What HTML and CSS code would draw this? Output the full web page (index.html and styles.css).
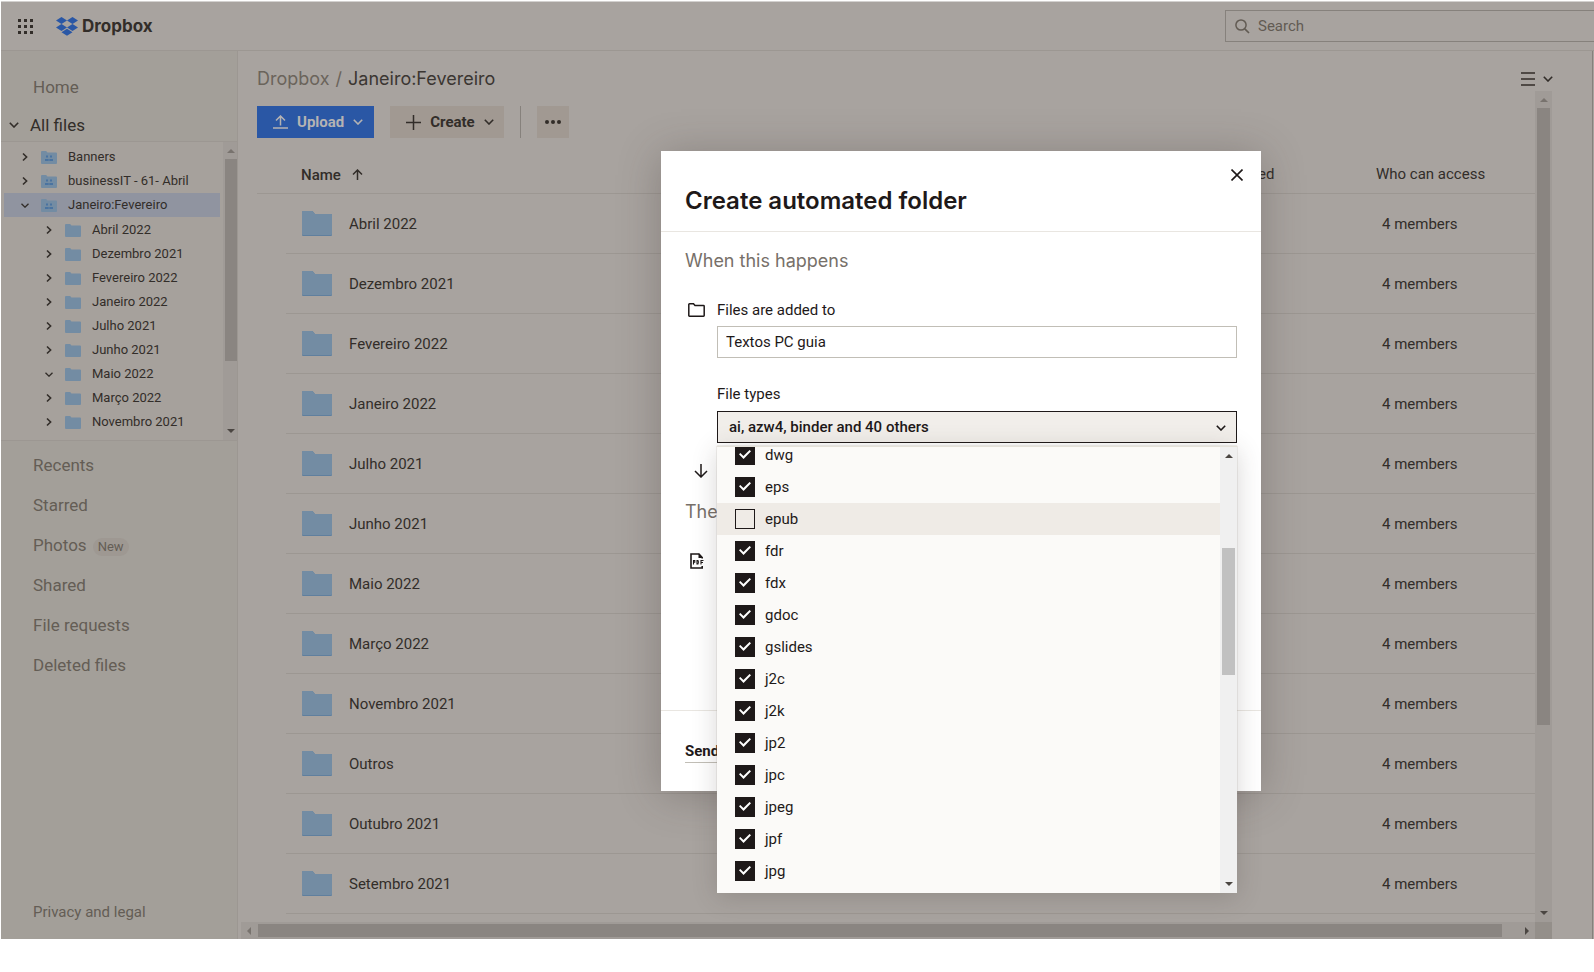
FILE: index.html
```
<!DOCTYPE html>
<html lang="en">
<head>
<meta charset="utf-8">
<title>Janeiro:Fevereiro - Dropbox</title>
<link rel="stylesheet" href="styles.css">
</head>
<body>
<svg class="defs" aria-hidden="true">
  <symbol id="chev-down" viewBox="0 0 10 6"><path d="M.8.8 5 5 9.2.8" fill="none" stroke="currentColor" stroke-width="1.6"/></symbol>
  <symbol id="chev-right" viewBox="0 0 6 10"><path d="M1 1.5 4.6 5 1 8.5" fill="none" stroke="currentColor" stroke-width="1.6"/></symbol>
  <symbol id="folder" viewBox="0 0 30 25"><path d="M0 1.2Q0 0 1.2 0H10.5L13 3H29Q30 3 30 4V24Q30 25 29 25H1Q0 25 0 24Z" fill="#5f7f9e"/><path d="M0 1.2Q0 0 1.2 0H10.5L13 3H29Q30 3 30 4V23.2Q30 24 29 24H1Q0 24 0 23.2Z" fill="#738ca3"/></symbol>
  <symbol id="folder-sm" viewBox="0 0 16 13"><path d="M0 1Q0 0 1 0H5.2L6.4 1.6H15Q16 1.6 16 2.6V12Q16 13 15 13H1Q0 13 0 12Z" fill="#738ca3"/></symbol>
  <symbol id="folder-team" viewBox="0 0 16 13"><path d="M0 1Q0 0 1 0H5.2L6.4 1.6H15Q16 1.6 16 2.6V12Q16 13 15 13H1Q0 13 0 12Z" fill="#738ca3"/><path d="M5 4.500h2v2H5zM9 4.500h2v2H9zM4 8h3.700v2H4zM8.300 8H12v2H8.300z" fill="#4a73a0"/></symbol>
</svg>

<div class="app">
  <header class="topbar">
    <button class="apps" aria-label="Apps"><svg width="15" height="15" viewBox="0 0 15 15"><path d="M0 0h3v3H0zM6 0h3v3H6zM12 0h3v3h-3zM0 6h3v3H0zM6 6h3v3H6zM12 6h3v3h-3zM0 12h3v3H0zM6 12h3v3H6zM12 12h3v3h-3z" fill="currentColor"/></svg></button>
    <a class="logo" href="#"><svg width="22" height="19" viewBox="0 0 22 19"><path d="M5.500 0 11 3.500 5.500 7 0 3.500zM16.500 0 22 3.500 16.500 7 11 3.500zM0 10.500 5.500 7 11 10.500 5.500 14zM16.500 7 22 10.500 16.500 14 11 10.500zM5.500 15.300 11 11.800 16.500 15.300 11 18.800z" fill="#2a57a5"/></svg><span>Dropbox</span></a>
    <label class="search"><svg width="15" height="15" viewBox="0 0 15 15"><circle cx="6" cy="6" r="5.100" fill="none" stroke="currentColor" stroke-width="1.500"/><path d="m9.800 9.800 4.200 4.200" stroke="currentColor" stroke-width="1.700"/></svg><input type="search" placeholder="Search" aria-label="Search"></label>
  </header>

  <div class="columns">
    <nav class="sidebar">
      <a class="nav-item home" href="#">Home</a>
      <a class="all-files" href="#"><svg width="10" height="6"><use href="#chev-down"/></svg>All files</a>
      <div class="tree">
        <ul class="tree-list">
          <li class="node"><svg class="chev" width="6" height="10"><use href="#chev-right"/></svg><svg width="16" height="13"><use href="#folder-team"/></svg><span>Banners</span></li>
          <li class="node"><svg class="chev" width="6" height="10"><use href="#chev-right"/></svg><svg width="16" height="13"><use href="#folder-team"/></svg><span>businessIT - 61- Abril</span></li>
          <li class="node selected"><svg class="chev" width="8" height="5"><use href="#chev-down"/></svg><svg width="16" height="13"><use href="#folder-team"/></svg><span>Janeiro:Fevereiro</span></li>
          <li class="node child"><svg class="chev" width="6" height="10"><use href="#chev-right"/></svg><svg width="16" height="13"><use href="#folder-sm"/></svg><span>Abril 2022</span></li>
          <li class="node child"><svg class="chev" width="6" height="10"><use href="#chev-right"/></svg><svg width="16" height="13"><use href="#folder-sm"/></svg><span>Dezembro 2021</span></li>
          <li class="node child"><svg class="chev" width="6" height="10"><use href="#chev-right"/></svg><svg width="16" height="13"><use href="#folder-sm"/></svg><span>Fevereiro 2022</span></li>
          <li class="node child"><svg class="chev" width="6" height="10"><use href="#chev-right"/></svg><svg width="16" height="13"><use href="#folder-sm"/></svg><span>Janeiro 2022</span></li>
          <li class="node child"><svg class="chev" width="6" height="10"><use href="#chev-right"/></svg><svg width="16" height="13"><use href="#folder-sm"/></svg><span>Julho 2021</span></li>
          <li class="node child"><svg class="chev" width="6" height="10"><use href="#chev-right"/></svg><svg width="16" height="13"><use href="#folder-sm"/></svg><span>Junho 2021</span></li>
          <li class="node child"><svg class="chev" width="8" height="5"><use href="#chev-down"/></svg><svg width="16" height="13"><use href="#folder-sm"/></svg><span>Maio 2022</span></li>
          <li class="node child"><svg class="chev" width="6" height="10"><use href="#chev-right"/></svg><svg width="16" height="13"><use href="#folder-sm"/></svg><span>Março 2022</span></li>
          <li class="node child"><svg class="chev" width="6" height="10"><use href="#chev-right"/></svg><svg width="16" height="13"><use href="#folder-sm"/></svg><span>Novembro 2021</span></li>
          <li class="node child"><svg class="chev" width="6" height="10"><use href="#chev-right"/></svg><svg width="16" height="13"><use href="#folder-sm"/></svg></li>
        </ul>
        <div class="vbar tree-bar"><i class="up dim"></i><b></b><i class="down"></i></div>
      </div>
      <div class="nav-list">
        <a class="nav-item" href="#">Recents</a>
        <a class="nav-item" href="#">Starred</a>
        <a class="nav-item" href="#">Photos <span class="badge">New</span></a>
        <a class="nav-item" href="#">Shared</a>
        <a class="nav-item" href="#">File requests</a>
        <a class="nav-item" href="#">Deleted files</a>
      </div>
      <a class="legal" href="#">Privacy and legal</a>
    </nav>

    <main class="main">
      <div class="crumbs">
        <a href="#">Dropbox</a><span class="slash">/</span><span class="here">Janeiro:Fevereiro</span>
        <button class="view" aria-label="View options"><svg width="14" height="14" viewBox="0 0 14 14"><path d="M0 1h14M0 7h14M0 13h14" stroke="currentColor" stroke-width="1.500"/></svg><svg width="10" height="6"><use href="#chev-down"/></svg></button>
      </div>
      <div class="scroller">
        <div class="content">
          <div class="toolbar">
            <button class="btn primary"><svg width="15" height="14" viewBox="0 0 15 14"><path d="M7.500 10.500V1M3 5.500 7.500 1 12 5.500M0 13h15" fill="none" stroke="currentColor" stroke-width="1.500"/></svg>Upload<svg width="10" height="6"><use href="#chev-down"/></svg></button>
            <button class="btn"><svg width="15" height="15" viewBox="0 0 15 15"><path d="M7.500 0v15M0 7.500h15" stroke="currentColor" stroke-width="1.500"/></svg>Create<svg width="10" height="6"><use href="#chev-down"/></svg></button>
            <span class="rule"></span>
            <button class="btn more" aria-label="More"><svg width="16" height="4" viewBox="0 0 16 4"><circle cx="2" cy="2" r="2"/><circle cx="8" cy="2" r="2"/><circle cx="14" cy="2" r="2"/></svg></button>
          </div>
          <table class="files">
            <colgroup><col class="c-check"><col><col class="c-mod"><col class="c-who"></colgroup>
            <thead><tr><th></th><th class="name">Name <svg width="11" height="11" viewBox="0 0 11 11"><path d="M5.500 11V1M1 5.500 5.500 1 10 5.500" fill="none" stroke="currentColor" stroke-width="1.500"/></svg></th><th>Modified</th><th>Who can access</th></tr></thead>
            <tbody>
              <tr><td></td><td><div class="name"><svg width="30" height="25"><use href="#folder"/></svg>Abril 2022</div></td><td></td><td class="who">4 members</td></tr>
              <tr><td></td><td><div class="name"><svg width="30" height="25"><use href="#folder"/></svg>Dezembro 2021</div></td><td></td><td class="who">4 members</td></tr>
              <tr><td></td><td><div class="name"><svg width="30" height="25"><use href="#folder"/></svg>Fevereiro 2022</div></td><td></td><td class="who">4 members</td></tr>
              <tr><td></td><td><div class="name"><svg width="30" height="25"><use href="#folder"/></svg>Janeiro 2022</div></td><td></td><td class="who">4 members</td></tr>
              <tr><td></td><td><div class="name"><svg width="30" height="25"><use href="#folder"/></svg>Julho 2021</div></td><td></td><td class="who">4 members</td></tr>
              <tr><td></td><td><div class="name"><svg width="30" height="25"><use href="#folder"/></svg>Junho 2021</div></td><td></td><td class="who">4 members</td></tr>
              <tr><td></td><td><div class="name"><svg width="30" height="25"><use href="#folder"/></svg>Maio 2022</div></td><td></td><td class="who">4 members</td></tr>
              <tr><td></td><td><div class="name"><svg width="30" height="25"><use href="#folder"/></svg>Março 2022</div></td><td></td><td class="who">4 members</td></tr>
              <tr><td></td><td><div class="name"><svg width="30" height="25"><use href="#folder"/></svg>Novembro 2021</div></td><td></td><td class="who">4 members</td></tr>
              <tr><td></td><td><div class="name"><svg width="30" height="25"><use href="#folder"/></svg>Outros</div></td><td></td><td class="who">4 members</td></tr>
              <tr><td></td><td><div class="name"><svg width="30" height="25"><use href="#folder"/></svg>Outubro 2021</div></td><td></td><td class="who">4 members</td></tr>
              <tr><td></td><td><div class="name"><svg width="30" height="25"><use href="#folder"/></svg>Setembro 2021</div></td><td></td><td class="who">4 members</td></tr>
            </tbody>
          </table>
        </div>
        <div class="vbar main-bar"><i class="up dim"></i><b></b><i class="down"></i></div>
        <div class="hbar"><i class="left dim"></i><b></b><i class="right"></i></div>
        <div class="corner"></div>
      </div>
    </main>
  </div>

  <div class="overlay">
    <section class="modal" role="dialog" aria-labelledby="dlg-title">
      <button class="close" aria-label="Close"><svg width="12" height="12" viewBox="0 0 12 12"><path d="m.5.5 11 11M11.500.5l-11 11" stroke="currentColor" stroke-width="1.600"/></svg></button>
      <h1 class="title" id="dlg-title">Create automated folder</h1>
      <div class="body">
        <h2 class="step">When this happens</h2>
        <div class="field-row">
          <svg width="17" height="14" viewBox="0 0 17 14"><path d="M.8 1.500Q.8.800 1.500.800H5.500L7 2.600H15.500Q16.200 2.600 16.200 3.300V12.500Q16.200 13.200 15.500 13.200H1.500Q.8 13.200.8 12.500Z" fill="none" stroke="currentColor" stroke-width="1.500"/></svg>
          <div class="field">
            <label for="target">Files are added to</label>
            <input class="text" id="target" type="text" value="Textos PC guia">
          </div>
        </div>
        <div class="field types">
          <label for="types">File types</label>
          <div class="select-wrap">
            <select class="select" id="types"><option>ai, azw4, binder and 40 others</option></select>
            <svg class="select-chev" width="10" height="6"><use href="#chev-down"/></svg>
            <div class="menu">
              <div class="options">
                <label class="option"><input type="checkbox" checked>dwg</label>
                <label class="option"><input type="checkbox" checked>eps</label>
                <label class="option hover"><input type="checkbox">epub</label>
                <label class="option"><input type="checkbox" checked>fdr</label>
                <label class="option"><input type="checkbox" checked>fdx</label>
                <label class="option"><input type="checkbox" checked>gdoc</label>
                <label class="option"><input type="checkbox" checked>gslides</label>
                <label class="option"><input type="checkbox" checked>j2c</label>
                <label class="option"><input type="checkbox" checked>j2k</label>
                <label class="option"><input type="checkbox" checked>jp2</label>
                <label class="option"><input type="checkbox" checked>jpc</label>
                <label class="option"><input type="checkbox" checked>jpeg</label>
                <label class="option"><input type="checkbox" checked>jpf</label>
                <label class="option"><input type="checkbox" checked>jpg</label>
              </div>
              <div class="vbar menu-bar"><i class="up"></i><b></b><i class="down"></i></div>
            </div>
          </div>
        </div>
        <svg class="then-arrow" width="14" height="14" viewBox="0 0 14 14"><path d="M7 0v13M1 7l6 6 6-6" fill="none" stroke="currentColor" stroke-width="1.500"/></svg>
        <h2 class="step then">Then</h2>
        <svg class="pdf" width="14" height="16" viewBox="0 0 14 16"><path d="M12.200 5.500V4.500L9 1H1V15H12.200V13" fill="none" stroke="currentColor" stroke-width="1.600"/><path d="M8.500.500 12.800 5H8.500z" fill="currentColor"/><path d="M3.500 11.500V7.500h1.300v1.800H3.500M7 7.500v3.500h1q1-1.700 0-3.500zM11 11.500V7.500h2.500M11 9.500h2" fill="none" stroke="currentColor" stroke-width="1.100"/></svg>
      </div>
      <footer class="foot"><a href="#">Send feedback</a></footer>
    </section>
  </div>
</div>
</body>
</html>
```
FILE: styles.css
```
* { box-sizing: border-box; }
body {
  margin: 0;
  background: #fff;
  color: #322d29;
  font-family: Roboto, "Liberation Sans", sans-serif;
  font-size: 15px;
  line-height: 20px;
  overflow-x: hidden;
}
a { color: inherit; text-decoration: none; }
button { border: 0; padding: 0; background: none; color: inherit; font: inherit; }
svg { display: block; flex: none; }
.defs { position: absolute; width: 0; height: 0; }

.app { position: relative; margin: 1px 0 0 1px; border-top: 1px solid #d3d1cf; background: #a8a39f; }

.topbar { display: flex; align-items: center; height: 49px; padding-left: 17px; border-bottom: 1px solid #9c9792; }
.logo { display: flex; align-items: center; gap: 4px; margin-left: 23px; font: 700 17px/24px Inter, sans-serif; }
.search { display: flex; align-items: center; gap: 8px; width: 369px; height: 32px; margin-left: auto; padding-left: 9px; border: 1px solid #86817c; border-right: 0; color: #625b53; }
.search input { flex: 1; min-width: 0; border: 0; padding: 0; background: none; color: inherit; font: inherit; }
.search input::placeholder { color: #625b53; opacity: 1; }

.columns { display: flex; }
.sidebar { display: flex; flex-direction: column; width: 237px; border-right: 1px solid #9c9792; background: #a39f99; color: #645d55; font-size: 17px; }
.nav-item { display: flex; align-items: center; gap: 6px; height: 40px; padding-left: 32px; }
.home { margin-top: 16px; }
.all-files { display: flex; align-items: center; gap: 11px; height: 34px; padding: 2px 0 0 8px; color: #322d29; }
.tree { display: flex; height: 300px; border: solid #9c9792; border-width: 1px 0; background: #a6a19c; color: #322d29; font-size: 13px; overflow: hidden; }
.tree-list { flex: 1; margin: 0; padding: 3px 3px 0; list-style: none; }
.node { display: flex; align-items: center; gap: 11px; height: 24px; padding-left: 16px; }
.node.child { padding-left: 40px; }
.node .chev { width: 10px; }
.selected { margin-bottom: 1px; background: #9094a0; }
.badge { margin-top: 3px; padding: 0 5px; border-radius: 9px; background: #9e9892; font-size: 13px; line-height: 18px; }
.nav-list { padding-top: 4px; }
.legal { margin: auto 0 17px 32px; font-size: 15px; }

.vbar, .hbar { display: flex; align-items: center; background: #a09b97; }
.vbar { flex-direction: column; width: 17px; }
.vbar b { width: 13px; background: #8a8581; }
.vbar i, .hbar i { border: 4px solid transparent; }
.up { margin: 3px 0 6px; border-bottom-color: #4b4642 !important; }
.down { margin: auto 0 3px; border-top-color: #4b4642 !important; }
.up.dim { border-bottom-color: #78736e !important; }
.tree-bar { width: 14px; padding-left: 2px; }
.tree-bar b { width: 12px; height: 202px; }
.main-bar b { height: 617px; }
.hbar { height: 17px; }
.hbar b { flex: 1; height: 13px; background: #8a8581; }
.left { margin: 0 7px 0 2px; border-right-color: #78736e !important; }
.right { margin: 0 2px 0 23px; border-left-color: #4b4642 !important; }
.corner { background: #948f8a; }

.main { flex: 1; min-width: 0; display: flex; flex-direction: column; margin-right: 1px; border-right: 1px solid #86817c; }
.crumbs { display: flex; align-items: center; gap: 6px; height: 40px; padding: 16px 39px 0 19px; color: #6b645b; font: 18px/24px Inter, sans-serif; }
.here { color: #3b3632; }
.view { display: flex; align-items: center; gap: 8px; margin-left: auto; color: #322d29; }
.scroller { display: grid; grid-template-columns: 1fr 17px; margin: 0 40px 0 3px; }
.content { padding: 15px 0 8px 16px; }
.toolbar { display: flex; gap: 16px; }
.btn { display: flex; align-items: center; gap: 9px; height: 32px; padding: 0 10px 0 16px; background: #a19992; font-weight: 700; }
.btn.primary { padding-right: 11px; background: #2a57a5; color: #b5b3b3; }
.btn.more { justify-content: center; width: 32px; padding: 0; fill: currentColor; }
.rule { width: 1px; background: #86817c; }

.files { width: 100%; margin-top: 16px; table-layout: fixed; border-collapse: separate; border-spacing: 0; }
.c-check { width: 29px; }
.c-mod { width: 160px; }
.c-who { width: 159px; }
.files th { height: 40px; padding: 0; border-bottom: 1px solid #9c9792; text-align: left; font-weight: 400; }
.files th.name { padding: 2px 0 0 15px; font-weight: 500; }
th.name svg { display: inline-block; margin-left: 7px; }
.files td { height: 60px; padding: 0; border-bottom: 1px solid #9c9792; }
.files td:first-child { border-bottom: 0; }
div.name { display: flex; align-items: center; gap: 17px; padding-left: 16px; }
.files td.who { padding-left: 6px; }

.overlay { position: absolute; inset: 0; display: flex; align-items: center; justify-content: center; padding-left: 327px; }
.modal { position: relative; width: 600px; background: #fff; color: #1e1919; box-shadow: 0 4px 40px rgba(60, 50, 45, .3); }
.close { position: absolute; top: 18px; right: 18px; }
.title { margin: 0; padding: 33px 24px 13px; border-bottom: 1px solid #e9e6e1; font: 600 24px/34px Inter, sans-serif; }
.body { padding: 17px 24px 0; height: 478px; }
.step { margin: 0; color: #777069; font: 400 18px/24px Inter, sans-serif; }
.field-row { display: flex; gap: 12px; margin-top: 27px; padding-left: 3px; }
.field-row > svg { margin-top: 3px; }
.field { flex: 1; display: flex; flex-direction: column; gap: 6px; }
.field.types { margin: 26px 0 0 32px; gap: 7px; }
.text, .select { display: block; width: 100%; height: 32px; border: 1px solid #c1beb6; background: #fff; color: inherit; font: inherit; padding: 0 8px; }
.select-wrap { position: relative; }
.select { appearance: none; padding: 0 11px; border-color: #1e1919; border-radius: 0; background: #f1eeea; font-weight: 500; }
.select-chev { position: absolute; top: 14px; right: 11px; }
.then-arrow { margin: 21px 0 0 9px; }
.then { margin-top: 22px; }
.pdf { margin: 29px 0 0 5px; }
.foot { height: 81px; padding: 29px 24px 0; border-top: 1px solid #e9e6e1; font-weight: 700; }
.foot a { display: inline-block; border-bottom: 1px solid #c1beb6; line-height: 22px; }

.menu { position: absolute; top: 35px; left: 0; right: 0; display: flex; height: 447px; border-top: 1px solid #e5e2d9; background: #fbfaf8; box-shadow: 0 4px 24px rgba(60, 50, 45, .2), 0 0 1px #aaa69c; overflow: hidden; }
.options { flex: 1; margin-top: -8px; }
.option { display: flex; align-items: center; gap: 10px; height: 32px; padding-left: 18px; }
.option.hover { background: #efebe6; }
.option input { appearance: none; display: grid; place-items: center; width: 20px; height: 20px; margin: 0; border: 1px solid #1e1919; }
.option input:checked { background: #1e1919; }
.option input:checked::after { content: ""; width: 12px; height: 9px; background: #fff; clip-path: polygon(0 47%, 11% 34%, 37% 68%, 88% 0, 100% 14%, 38% 100%); }
.menu-bar { background: #f0f0f0; }
.menu-bar b { height: 127px; margin-top: 84px; background: #c1c1c1; }
```
